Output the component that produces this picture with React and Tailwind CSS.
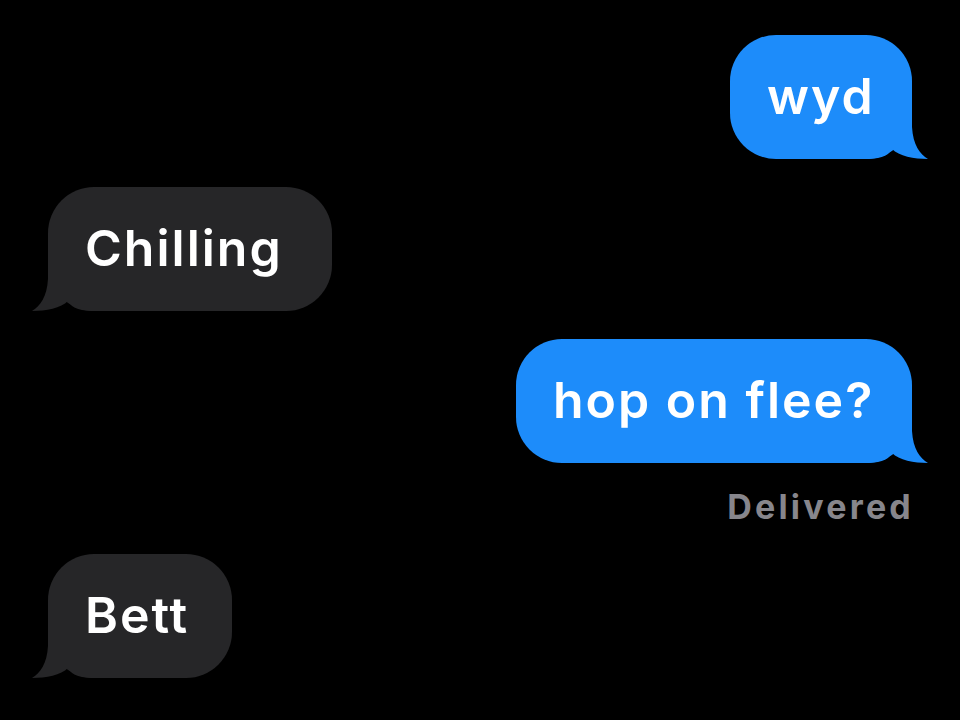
import React from "react";

const messages = [
  { id: 1, text: "wyd", mine: true, width: "w-[182px]" },
  { id: 2, text: "Chilling", mine: false, width: "w-[284px]" },
  { id: 3, text: "hop on flee?", mine: true, width: "w-[396px]", status: "Delivered" },
  { id: 4, text: "Bett", mine: false, width: "w-[184px]" },
];

// little curled tail on the bottom corner of a bubble
const Tail = ({ mine }) => (
  <svg
    width="64"
    height="48"
    viewBox="0 0 64 48"
    className={`absolute bottom-0 ${mine ? "right-[-16px] fill-[#1d8cfa]" : "left-[-16px] -scale-x-100 fill-[#262628]"}`}
  >
    <path d="M0 48 C14 48 24 46 28 38 C35 45 50 48 64 48 C56 43 49 34 48 16 L48 0 L0 0 Z" />
  </svg>
);

const Bubble = ({ msg }) => (
  <div
    className={`relative h-[124px] ${msg.width} rounded-[46px] flex items-center pl-[37px] ${
      msg.mine ? "bg-[#1d8cfa]" : "bg-[#262628]"
    }`}
  >
    <span className="relative z-10 text-white text-[50px] font-semibold leading-none whitespace-nowrap tracking-[2px] -mt-[2px]">
      {msg.text}
    </span>
    <Tail mine={msg.mine} />
  </div>
);

export default function App() {
  return (
    <div
      className="w-[960px] h-[720px] bg-black overflow-hidden px-[48px] pt-[35px] flex flex-col"
      style={{ fontFamily: "Inter, 'Noto Sans', sans-serif" }}
    >
      {messages.map((msg, i) => (
        <div
          key={msg.id}
          className={`flex flex-col ${msg.mine ? "items-end" : "items-start"} ${
            i > 0 && !messages[i - 1].status ? "mt-[28px]" : ""
          } ${i > 0 && messages[i - 1].status ? "mt-[27px]" : ""}`}
        >
          <Bubble msg={msg} />
          {msg.status && (
            <div className="mt-[24px] -mr-[2px] text-[34px] leading-[40px] font-bold text-[#87868c] tracking-[3.2px]">
              {msg.status}
            </div>
          )}
        </div>
      ))}
    </div>
  );
}
